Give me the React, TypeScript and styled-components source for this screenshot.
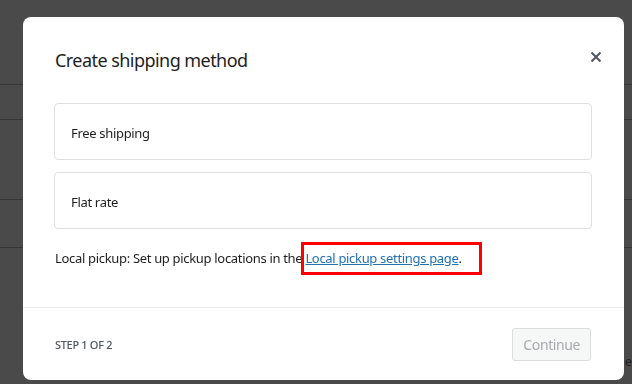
import React from "react";
import styled, { createGlobalStyle } from "styled-components";

const Global = createGlobalStyle`
  html, body { margin: 0; padding: 0; }
  body {
    background: #4a4a4a;
    font-family: "Noto Sans", "Open Sans", sans-serif;
    width: 632px;
    height: 384px;
    overflow: hidden;
  }
`;

const Backdrop = styled.div`
  width: 632px;
  height: 384px;
  background: #4a4a4a;
  display: flex;
  flex-direction: column;
`;

const BgRow = styled.div<{ $h: number; $line?: boolean }>`
  height: ${(p) => p.$h}px;
  box-sizing: border-box;
  border-bottom: ${(p) => (p.$line ? "1px solid #353535" : "none")};
  display: flex;
  align-items: flex-end;
  justify-content: flex-end;
  padding-bottom: 14px;
  font-size: 13px;
  color: #1e1e1e;
`;

const BgText = styled.span`
  margin-right: 0;
`;

const Modal = styled.div`
  position: fixed;
  top: 17px;
  left: 23px;
  width: 601px;
  height: 363px;
  background: #fff;
  border-radius: 8px;
  display: flex;
  flex-direction: column;
  box-sizing: border-box;
  letter-spacing: -0.32px;
`;

const Header = styled.div`
  display: flex;
  justify-content: space-between;
  align-items: flex-start;
  padding: 30px 18px 0 32px;
`;

const Title = styled.h1`
  margin: 0;
  font-size: 18px;
  line-height: 26px;
  font-weight: 400;
  letter-spacing: -0.55px;
  color: #1e1e1e;
`;

const Close = styled.button`
  border: 0;
  background: none;
  padding: 0;
  width: 20px;
  height: 20px;
  display: flex;
  align-items: center;
  justify-content: center;
  cursor: pointer;
`;

const Body = styled.div`
  padding: 30px 32px 0 31px;
  display: flex;
  flex-direction: column;
  gap: 12px;
  flex: 1;
`;

const Option = styled.div`
  height: 57px;
  box-sizing: border-box;
  border: 1px solid #e0e0e0;
  border-radius: 4px;
  display: flex;
  align-items: center;
  padding: 3px 16px 0;
  font-size: 13px;
  color: #1e1e1e;
`;

const Note = styled.p`
  margin: 7px 0 0 1px;
  font-size: 13px;
  line-height: 20px;
  color: #1e1e1e;
`;

const LinkWrap = styled.span`
  position: relative;
`;

const Link = styled.a`
  color: #2271b1;
  text-decoration: underline;
`;

const Highlight = styled.span`
  position: absolute;
  left: -4px;
  right: -20px;
  top: -7px;
  bottom: -8px;
  border: 3px solid #f00;
  pointer-events: none;
`;

const Footer = styled.div`
  border-top: 1px solid #ececec;
  height: 72px;
  display: flex;
  align-items: center;
  justify-content: space-between;
  padding: 0 32px 0 32px;
`;

const Step = styled.span`
  font-size: 11px;
  text-transform: uppercase;
  color: #50575e;
  font-weight: 500;
`;

const Continue = styled.button`
  height: 33px;
  padding: 0 10px;
  border: 1px solid #dcdcde;
  background: #f6f7f7;
  color: #a7aaad;
  border-radius: 3px;
  font-family: inherit;
  font-size: 14px;
  letter-spacing: -0.4px;
  margin-right: 1px;
`;

export default function App() {
  return (
    <>
      <Global />
      <Backdrop>
        <BgRow $h={85} $line />
        <BgRow $h={35} $line />
        <BgRow $h={80} $line />
        <BgRow $h={48} $line />
        <BgRow $h={136}>
          <BgText>e</BgText>
        </BgRow>
      </Backdrop>
      <Modal>
        <Header>
          <Title>Create shipping method</Title>
          <Close aria-label="Close">
            <svg width="12" height="12" viewBox="0 0 12 12">
              <path d="M1.5 1.5L10.5 10.5M10.5 1.5L1.5 10.5" stroke="#50575e" strokeWidth="2" />
            </svg>
          </Close>
        </Header>
        <Body>
          <Option>Free shipping</Option>
          <Option>Flat rate</Option>
          <Note>
            Local pickup: Set up pickup locations in the{" "}
            <LinkWrap>
              <Link href="#">Local pickup settings page</Link>.
              <Highlight />
            </LinkWrap>
          </Note>
        </Body>
        <Footer>
          <Step>Step 1 of 2</Step>
          <Continue disabled>Continue</Continue>
        </Footer>
      </Modal>
    </>
  );
}
